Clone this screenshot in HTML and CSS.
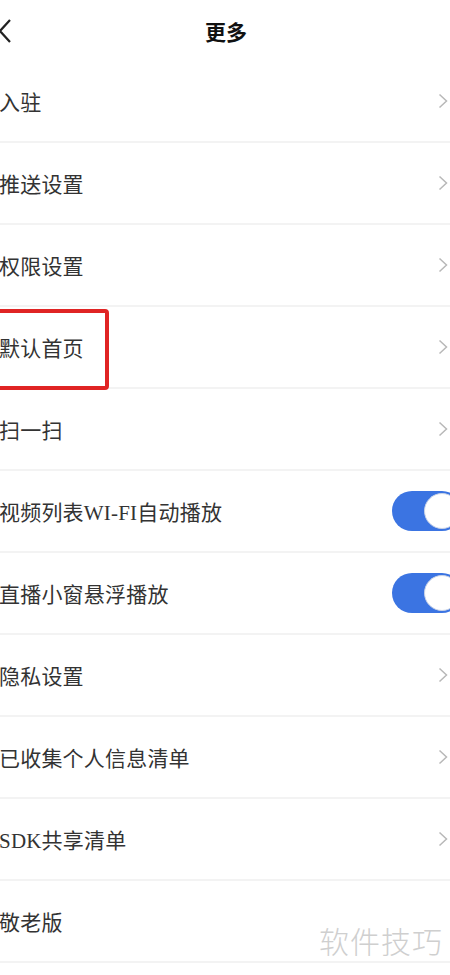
FILE: index.html
```html
<!DOCTYPE html>
<html lang="zh-CN">
<head>
  <meta charset="UTF-8" />
  <meta name="viewport" content="width=device-width, initial-scale=1.0" />
  <title>更多</title>
  <link rel="stylesheet" href="styles.css">
</head>
<body>
  <div class="page">
    <div class="top-bar">
      <svg class="back" width="14" height="26" viewBox="0 0 14 26"><polyline points="12,2 2,13 12,24" fill="none" stroke="#222" stroke-width="2.2" /></svg>
      <h1>更多</h1>
    </div>

    <div class="list">
      <div class="row"><span>入驻</span><svg class="arrow" viewBox="0 0 10 16"><polyline points="1.5,1.5 8.5,8 1.5,14.5" /></svg></div>
      <div class="row"><span>推送设置</span><svg class="arrow" viewBox="0 0 10 16"><polyline points="1.5,1.5 8.5,8 1.5,14.5" /></svg></div>
      <div class="row"><span>权限设置</span><svg class="arrow" viewBox="0 0 10 16"><polyline points="1.5,1.5 8.5,8 1.5,14.5" /></svg></div>
      <div class="row marked"><span>默认首页</span><svg class="arrow" viewBox="0 0 10 16"><polyline points="1.5,1.5 8.5,8 1.5,14.5" /></svg>
        <div class="red-box"></div>
      </div>
      <div class="row"><span>扫一扫</span><svg class="arrow" viewBox="0 0 10 16"><polyline points="1.5,1.5 8.5,8 1.5,14.5" /></svg></div>
      <div class="row"><span>视频列表WI-FI自动播放</span><div class="toggle on"><div class="knob"></div></div></div>
      <div class="row"><span>直播小窗悬浮播放</span><div class="toggle on"><div class="knob"></div></div></div>
      <div class="row"><span>隐私设置</span><svg class="arrow" viewBox="0 0 10 16"><polyline points="1.5,1.5 8.5,8 1.5,14.5" /></svg></div>
      <div class="row"><span>已收集个人信息清单</span><svg class="arrow" viewBox="0 0 10 16"><polyline points="1.5,1.5 8.5,8 1.5,14.5" /></svg></div>
      <div class="row"><span>SDK共享清单</span><svg class="arrow" viewBox="0 0 10 16"><polyline points="1.5,1.5 8.5,8 1.5,14.5" /></svg></div>
      <div class="row"><span>敬老版</span></div>
    </div>

    <div class="watermark">软件技巧</div>
  </div>
</body>
</html>
```

FILE: styles.css
```css
body {
  margin: 0;
  background: #fff;
  font-family: "Liberation Serif", "Noto Sans CJK SC", serif;
  color: #333;
  overflow: hidden;
}

.page {
  position: relative;
  width: 450px;
  height: 975px;
  overflow: hidden;
}

.top-bar {
  height: 61px;
  display: flex;
  align-items: center;
  justify-content: center;
  position: relative;
}

.top-bar .back {
  position: absolute;
  left: -2px;
  top: 18px;
}

.top-bar h1 {
  margin: 0 0 0 2px;
  font-family: "Noto Sans CJK SC", sans-serif;
  font-size: 21px;
  font-weight: 700;
  color: #111;
}

.row {
  position: relative;
  height: 80px;
  border-bottom: 2px solid #f3f3f3;
  display: flex;
  align-items: center;
  justify-content: space-between;
  font-size: 21px;
  padding-left: 0;
}

.row span {
  margin-left: -1px;
  letter-spacing: 0.2px;
}

.arrow {
  width: 10px;
  height: 16px;
  margin-right: 2px;
  fill: none;
  stroke: #b8b8b8;
  stroke-width: 1.5;
}

.toggle {
  width: 70px;
  height: 40px;
  border-radius: 20px;
  background: #3b74e2;
  margin-right: -12px;
  display: flex;
  align-items: center;
  justify-content: flex-end;
  padding: 0 2px;
  box-sizing: border-box;
}

.knob {
  width: 36px;
  height: 36px;
  border-radius: 50%;
  background: #fff;
  box-sizing: border-box;
  border: 1px solid #c9d3e6;
}

.red-box {
  position: absolute;
  left: -10px;
  top: 2px;
  width: 111px;
  height: 73px;
  border: 4px solid #e02424;
  border-radius: 4px;
}

.watermark {
  position: absolute;
  left: 319px;
  top: 918px;
  font-family: "Noto Sans CJK SC", sans-serif;
  font-size: 30px;
  font-weight: 300;
  color: #cfcfcf;
  letter-spacing: 1px;
}
```
